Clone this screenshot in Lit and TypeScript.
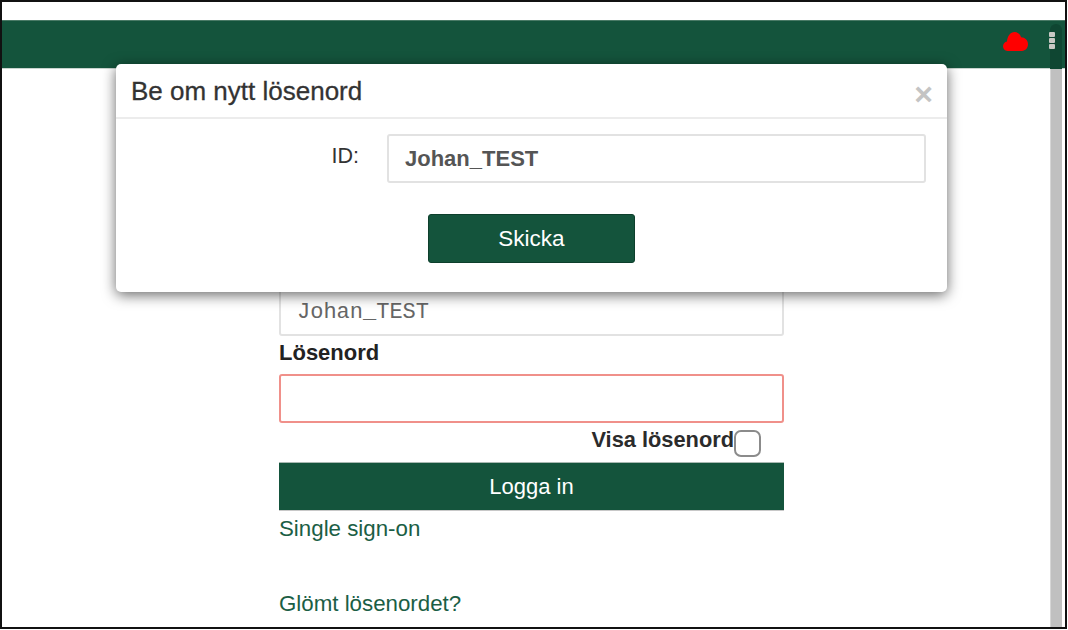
import { LitElement, html, css } from "lit";
import { customElement } from "lit/decorators.js";

@customElement("app-root")
export class AppRoot extends LitElement {
  static styles = css`
    :host { display: block; width: 1068px; height: 630px; font-family: "Liberation Sans", Arial, sans-serif; }
    * { box-sizing: border-box; }
    .frame { position: relative; width: 1067px; height: 629px; border: 2px solid #111; background: #fff; overflow: hidden; padding-top: 18px; }
    .topbar { height: 49px; background: #14543c; border-top: 1px solid #4a7a66; border-bottom: 1px solid #c9d4cf; display: flex; justify-content: flex-end; align-items: flex-start; padding: 11px 37px 0 0; }
    .cloud { width: 25px; height: 19px; display: block; }
    .dots { display: flex; flex-direction: column; gap: 1px; }
    .dots i { display: block; width: 6px; height: 5px; background: #c8c8c4; border-radius: 1px; }
    .form { width: 505px; margin-left: 277px; padding-top: 218px; display: flex; flex-direction: column; }
    .field { height: 49px; border: 2px solid #e2e2e2; border-radius: 3px; background: #fff; display: flex; align-items: center; padding: 0 16px; }
    .mono { font-family: "Liberation Mono", monospace; font-size: 22px; color: #666; padding-top: 1px; }
    .label { font-size: 22px; font-weight: 700; color: #222; line-height: 24px; margin: 5px 0 9px; }
    .err { border-color: #f0908a; }
    .show { display: flex; justify-content: flex-end; align-items: center; height: 27px; margin: 7px 23px 5px 0; font-size: 21.8px; font-weight: 700; color: #2b2b2b; }
    .show span:first-child { margin-bottom: 8px; }
    .box { width: 27px; height: 27px; border: 2px solid #8b8b8b; border-radius: 7px; background: #fff; }
    .btn { background: #14543c; color: #fff; font-size: 22px; display: flex; align-items: center; justify-content: center; }
    .login { height: 49px; border-top: 1px solid #a9b9b2; border-bottom: 1px solid #c8c8c8; padding-top: 1px; }
    .link { color: #1b5e45; font-size: 22.3px; line-height: 24px; }
    .sso { margin-top: 6px; }
    .forgot { margin-top: 51px; }
    .track { position: absolute; top: 67px; left: 1048px; bottom: 0; width: 12px; background: #c0c0c0; border-left: 1px solid #d6d6d6; }
    .track-top { position: absolute; top: 22px; left: 1048px; width: 12px; height: 45px; background: #0f4632; border-radius: 6px 6px 0 0; }
    .dots-wrap { position: absolute; top: 30px; left: 1047px; }
    .modal { position: absolute; left: 114px; top: 62px; width: 831px; height: 228px; background: #fff; border-radius: 5px; box-shadow: 0 3px 14px rgba(0,0,0,.6); display: flex; flex-direction: column; }
    .modal-head { height: 55px; border-bottom: 2px solid #ececec; display: flex; align-items: center; justify-content: space-between; padding: 0 14px 0 15px; }
    .modal-title { font-size: 26px; color: #333; line-height: 26px; -webkit-text-stroke: .3px #333; }
    .close { font-size: 32px; font-weight: 700; color: #c4c4c4; line-height: 30px; margin-top: 6px; }
    .row { display: flex; align-items: center; margin: 15px 21px 0 0; }
    .id { width: 243px; text-align: right; font-size: 21.5px; color: #333; margin-bottom: 4px; }
    .id-input { flex: 1; margin-left: 28px; font-size: 22px; font-weight: 700; color: #555; }
    .send-wrap { display: flex; justify-content: center; margin-top: 31px; }
    .send { width: 207px; height: 49px; border: 1px solid #0d3f2c; border-radius: 3px; font-size: 22.5px; padding-top: 1px; }
  `;

  render() {
    return html`
      <div class="frame">
        <div class="topbar">
          <svg class="cloud" viewBox="0 0 25 19" aria-hidden="true">
            <path fill="#ff0000" d="M4.5 19C1.8 19 0 16.9 0 14.3c0-2.5 1.7-4.5 4-4.9C4.4 4 7.4 0 11.6 0c3.3 0 5.7 2.1 6.5 5.2 3.9 0 6.9 3 6.9 6.9 0 3.9-2.5 6.9-6.1 6.9H4.5z" />
          </svg>
        </div>
        <div class="form">
          <div class="field mono">Johan_TEST</div>
          <div class="label">Lösenord</div>
          <div class="field err"></div>
          <div class="show"><span>Visa lösenord</span><span class="box"></span></div>
          <div class="btn login">Logga in</div>
          <a class="link sso">Single sign-on</a>
          <a class="link forgot">Glömt lösenordet?</a>
        </div>
        <div class="track-top"></div>
        <div class="track"></div>
        <div class="dots-wrap"><div class="dots"><i></i><i></i><i></i></div></div>
        <div class="modal">
          <div class="modal-head">
            <span class="modal-title">Be om nytt lösenord</span>
            <span class="close">×</span>
          </div>
          <div class="row">
            <span class="id">ID:</span>
            <div class="field id-input">Johan_TEST</div>
          </div>
          <div class="send-wrap"><div class="btn send">Skicka</div></div>
        </div>
      </div>
    `;
  }
}
